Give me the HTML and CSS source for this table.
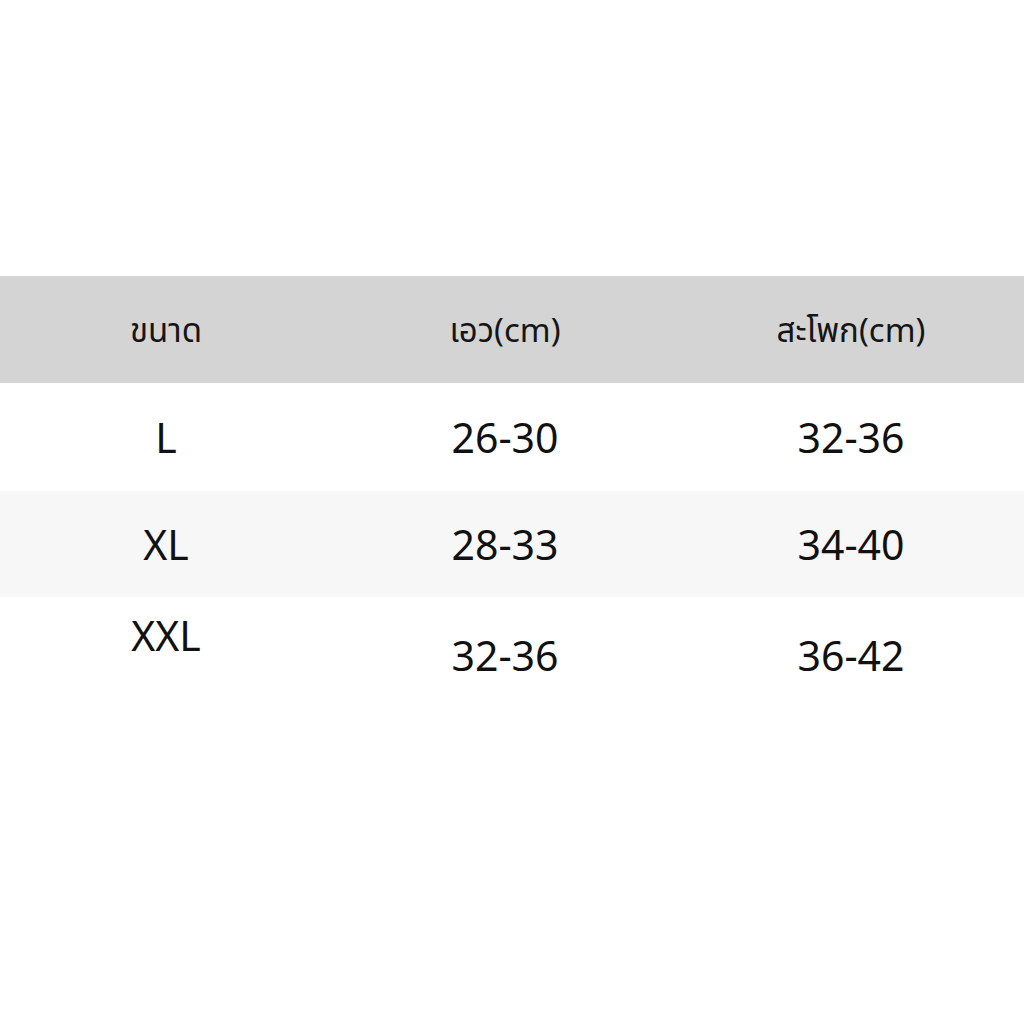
FILE: index.html
```html
<!DOCTYPE html>
<html lang="th">
<head>
<meta charset="utf-8">
<link rel="stylesheet" href="styles.css">
</head>
<body>
<div class="page">
  <div class="table">
    <div class="row head">
      <div class="cell">ขนาด</div>
      <div class="cell">เอว(cm)</div>
      <div class="cell">สะโพก(cm)</div>
    </div>
    <div class="row">
      <div class="cell">L</div>
      <div class="cell">26-30</div>
      <div class="cell">32-36</div>
    </div>
    <div class="row alt">
      <div class="cell">XL</div>
      <div class="cell">28-33</div>
      <div class="cell">34-40</div>
    </div>
    <div class="row last">
      <div class="cell up">XXL</div>
      <div class="cell">32-36</div>
      <div class="cell">36-42</div>
    </div>
  </div>
</div>
</body>
</html>
```
FILE: styles.css
```css
html, body {
  margin: 0;
  padding: 0;
  background: #ffffff;
}
.page {
  width: 1024px;
  height: 1024px;
  padding-top: 276px;
  box-sizing: border-box;
  font-family: "Noto Sans", "Noto Sans Thai", "Open Sans", sans-serif;
  color: #111111;
}
.row {
  display: grid;
  grid-template-columns: 332px 346px 346px;
  height: 108px;
  align-items: center;
}
.cell {
  text-align: center;
  font-size: 41px;
  line-height: 1;
}
.head {
  background: #d4d4d4;
  height: 107px;
}
.head .cell {
  font-size: 33px;
  color: #151515;
}
.alt {
  background: #f7f7f7;
  height: 106px;
}
.last {
  height: 116px;
}
.up {
  padding-bottom: 40px;
}
```
